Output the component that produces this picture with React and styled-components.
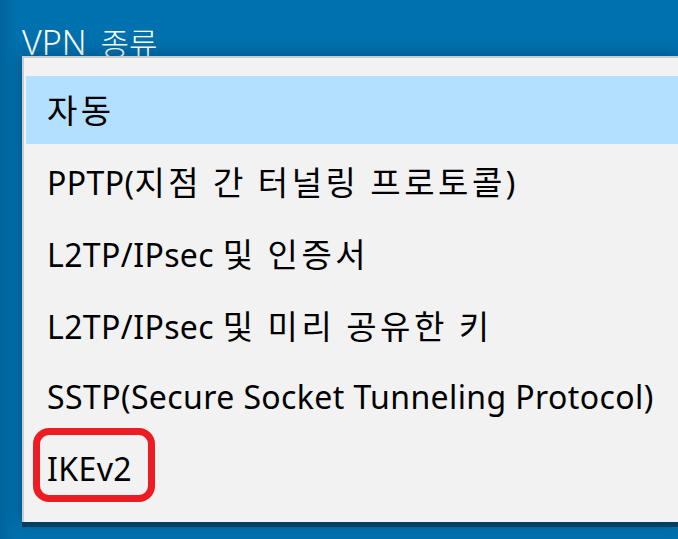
import React from 'react';
import styled, { createGlobalStyle } from 'styled-components';

const GlobalStyle = createGlobalStyle`
  html, body {
    margin: 0;
    padding: 0;
    height: 100%;
    overflow: hidden;
    background: #0071af;
  }
  #root {
    height: 100%;
  }
`

const Screen = styled.div`
  height: 100%;
  box-sizing: border-box;
  padding: 25px 0 0 22px;
  background: linear-gradient(90deg, #00649c 0px, #0070ae 16px, #0071af 40px);
  font-family: "Noto Sans", "Noto Sans CJK KR", sans-serif;
`

const Heading = styled.div`
  color: #ffffff;
  font-size: 34px;
  font-weight: 300;
  line-height: 34px;
  height: 34px;
  white-space: nowrap;
  word-spacing: 5px;
`

const Dropdown = styled.div`
  position: relative;
  z-index: 1;
  margin-top: -3px;
  display: flex;
  flex-direction: column;
  gap: 4px;
  background: #f2f2f2;
  border-top: 2px solid #cccccc;
  border-left: 2px solid #cccccc;
  padding: 18px 0 18px 2px;
  box-shadow: 0 5px 0 #033f63, 0 0 16px rgba(0, 20, 40, 0.35);
`

const Option = styled.div`
  position: relative;
  height: 68px;
  box-sizing: border-box;
  padding: 0 0 3px 21px;
  display: flex;
  align-items: center;
  background: ${props => props.$selected ? '#b3e0fe' : 'transparent'};
  color: #000000;
  font-size: 32px;
  letter-spacing: 0.4px;
  white-space: nowrap;
`

const Text = styled.span`
  white-space: pre;
`

// hangul runs are set a bit wider, like Malgun Gothic in the original
const Hangul = styled.span`
  font-family: "Noto Sans CJK KR", sans-serif;
  font-size: ${props => props.$size || 33}px;
  letter-spacing: ${props => props.$spacing ?? 3.5}px;
  word-spacing: 0;
`

const Marker = styled.span`
  position: absolute;
  left: 7px;
  top: -8px;
  width: 122px;
  height: 74px;
  box-sizing: border-box;
  border: 7px solid #ed1c24;
  border-radius: 16px;
`

const options = [
  '자동',
  'PPTP(지점 간 터널링 프로토콜)',
  'L2TP/IPsec 및 인증서',
  'L2TP/IPsec 및 미리 공유한 키',
  'SSTP(Secure Socket Tunneling Protocol)',
  'IKEv2',
];

const hangulRun = /([\uAC00-\uD7A3](?:[\uAC00-\uD7A3 ]*[\uAC00-\uD7A3])?)/;

const Label = ({ text, size, spacing }) => (
  <Text>
    {text.split(hangulRun).map((part, i) =>
      i % 2 === 1
        ? <Hangul key={i} $size={size} $spacing={spacing}>{part}</Hangul>
        : <React.Fragment key={i}>{part}</React.Fragment>
    )}
  </Text>
);

const App = () => {
  return (
    <Screen>
      <GlobalStyle />
      <Heading>
        <Label text='VPN 종류' size={31} spacing={0} />
      </Heading>
      <Dropdown>
        {options.map((label, i) => (
          <Option key={i} $selected={i === 0}>
            <Label text={label} />
            {label === 'IKEv2' && <Marker />}
          </Option>
        ))}
      </Dropdown>
    </Screen>
  );
};

export default App;
